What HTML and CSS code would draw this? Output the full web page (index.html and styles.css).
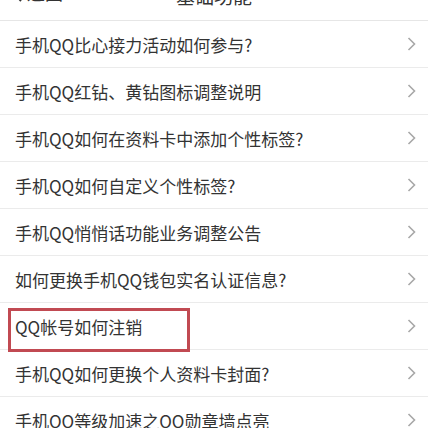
FILE: index.html
```html
<!DOCTYPE html>
<html>
<head>
<meta charset="utf-8">
<link rel="stylesheet" href="styles.css">
</head>
<body>
<div class="page">
  <div class="header">
    <div class="back">
      <svg class="back-icon" width="12" height="20" viewBox="0 0 12 20"><polyline points="10,1 2,10 10,19" fill="none" stroke="#333" stroke-width="2"/></svg>
      <span>返回</span>
    </div>
    <div class="title">基础功能</div>
  </div>
  <ul class="list">
    <li class="row"><span class="label">手机QQ比心接力活动如何参与?</span><svg class="chev" width="9" height="14" viewBox="0 0 9 14"><polyline points="1.5,1 7.5,7 1.5,13" fill="none" stroke="#a8a8a8" stroke-width="1.6"/></svg></li>
    <li class="row"><span class="label">手机QQ红钻、黄钻图标调整说明</span><svg class="chev" width="9" height="14" viewBox="0 0 9 14"><polyline points="1.5,1 7.5,7 1.5,13" fill="none" stroke="#a8a8a8" stroke-width="1.6"/></svg></li>
    <li class="row"><span class="label">手机QQ如何在资料卡中添加个性标签?</span><svg class="chev" width="9" height="14" viewBox="0 0 9 14"><polyline points="1.5,1 7.5,7 1.5,13" fill="none" stroke="#a8a8a8" stroke-width="1.6"/></svg></li>
    <li class="row"><span class="label">手机QQ如何自定义个性标签?</span><svg class="chev" width="9" height="14" viewBox="0 0 9 14"><polyline points="1.5,1 7.5,7 1.5,13" fill="none" stroke="#a8a8a8" stroke-width="1.6"/></svg></li>
    <li class="row"><span class="label">手机QQ悄悄话功能业务调整公告</span><svg class="chev" width="9" height="14" viewBox="0 0 9 14"><polyline points="1.5,1 7.5,7 1.5,13" fill="none" stroke="#a8a8a8" stroke-width="1.6"/></svg></li>
    <li class="row"><span class="label">如何更换手机QQ钱包实名认证信息?</span><svg class="chev" width="9" height="14" viewBox="0 0 9 14"><polyline points="1.5,1 7.5,7 1.5,13" fill="none" stroke="#a8a8a8" stroke-width="1.6"/></svg></li>
    <li class="row marked"><span class="label">QQ帐号如何注销</span><svg class="chev" width="9" height="14" viewBox="0 0 9 14"><polyline points="1.5,1 7.5,7 1.5,13" fill="none" stroke="#a8a8a8" stroke-width="1.6"/></svg><span class="mark"></span></li>
    <li class="row"><span class="label">手机QQ如何更换个人资料卡封面?</span><svg class="chev" width="9" height="14" viewBox="0 0 9 14"><polyline points="1.5,1 7.5,7 1.5,13" fill="none" stroke="#a8a8a8" stroke-width="1.6"/></svg></li>
    <li class="row"><span class="label">手机QQ等级加速之QQ勋章墙点亮</span><svg class="chev" width="9" height="14" viewBox="0 0 9 14"><polyline points="1.5,1 7.5,7 1.5,13" fill="none" stroke="#a8a8a8" stroke-width="1.6"/></svg></li>
  </ul>
</div>
</body>
</html>
```
FILE: styles.css
```css
html, body {
  margin: 0;
  padding: 0;
  background: #fff;
  overflow: hidden;
}
.page {
  width: 428px;
  height: 428px;
  overflow: hidden;
  font-family: "Noto Sans CJK SC", "Noto Sans", sans-serif;
  color: #333;
}
.header {
  height: 44px;
  margin-top: -24px;
  border-bottom: 1px solid #e6e6e6;
  display: flex;
  align-items: center;
  justify-content: center;
  position: relative;
}
.back {
  position: absolute;
  left: 11px;
  top: 0;
  height: 44px;
  display: flex;
  align-items: center;
  gap: 4px;
  font-size: 18px;
  margin-top: -6px;
}
.title {
  font-size: 19px;
  margin-top: -6px;
}
.list {
  list-style: none;
  margin: 0;
  padding: 0;
}
.row {
  height: 46px;
  border-bottom: 1px solid #ebebeb;
  display: flex;
  align-items: center;
  justify-content: space-between;
  padding: 0 12px 0 15px;
  position: relative;
}
.label {
  font-size: 17px;
  color: #333;
  white-space: nowrap;
}
.chev {
  flex: none;
}
.mark {
  position: absolute;
  left: 8px;
  top: 5px;
  width: 182px;
  height: 44px;
  box-sizing: border-box;
  border: 3px solid #c14a52;
}
```
